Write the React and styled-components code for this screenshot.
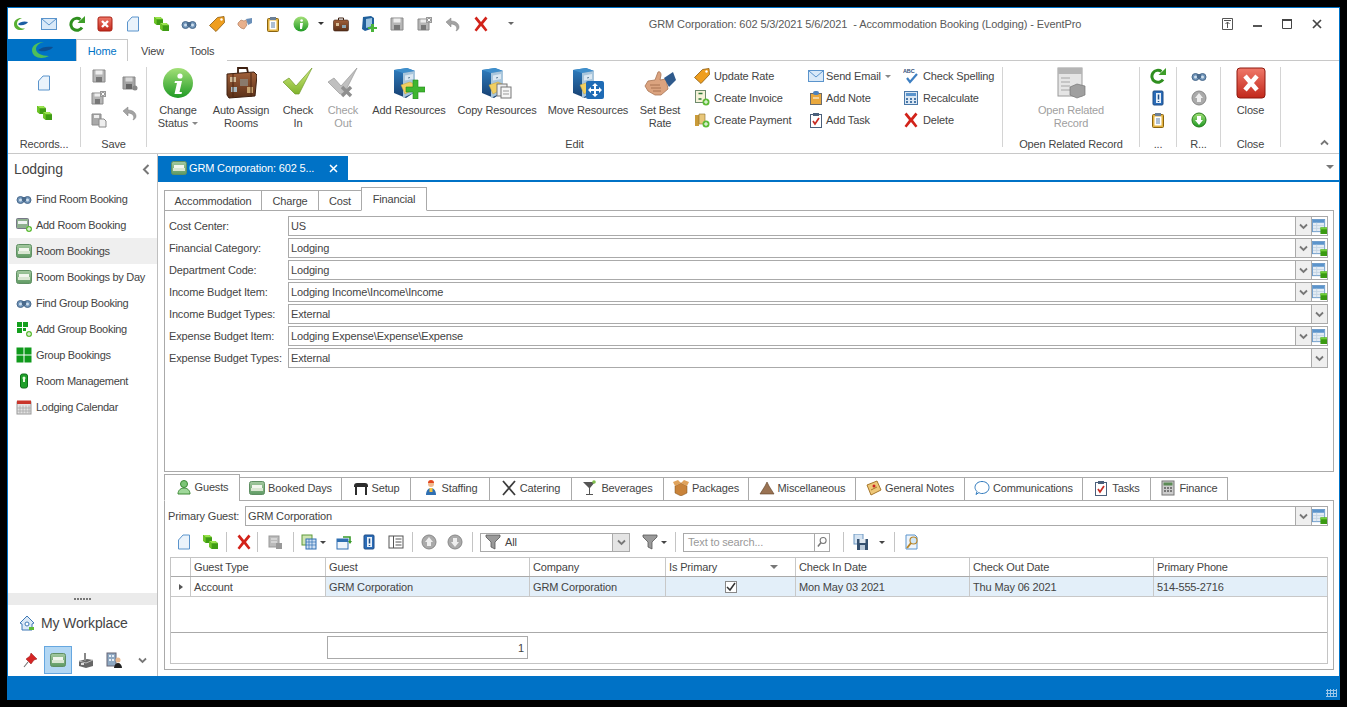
import * as React from 'react';
import styled, { createGlobalStyle } from 'styled-components';

const GlobalStyle = createGlobalStyle`
  html, body {
    margin: 0;
    height: 100%;
    background: #000;
    overflow: hidden;
  }
  body {
    font-family: 'Liberation Sans', Arial, sans-serif;
    font-size: 11px;
    letter-spacing: -0.15px;
    color: #444;
  }
`;

const cube = (x, y, s) => (
  <>
    <path d={`M${x} ${y}h${s * 1.4}l${s * 0.6} ${s * 0.5}v${s * 1.3}h-${s * 1.4}l-${s * 0.6}-${s * 0.5}z`} fill="#3f9c14" />
    <path d={`M${x} ${y}h${s * 1.4}l${s * 0.6} ${s * 0.5}h-${s * 1.4}z`} fill="#9ae34e" />
    <path d={`M${x} ${y}l${s * 0.6} ${s * 0.5}v${s * 1.3}l-${s * 0.6}-${s * 0.5}z`} fill="#6fc528" />
  </>
);

// small (16) and large (32) icon drawings
const cabinet = (
  <>
    <path d="M1 3l13-2 8 3v21l-9 6-12-5z" fill="url(#gBlueD)" />
    <path d="M1 3l13-2 8 3-12 2z" fill="#3f8fcc" />
    <path d="M10 6l12-2v21l-12 6z" fill="#a9c6dc" />
    <path d="M12 8.500l8-1.500v5l-8 1.500z" fill="#dbe8f2" />
    <path d="M15 10.500l2-.4v1l-2 .4z" fill="#5b7c96" />
    <path d="M8 18l9-3 4 2v5l-9 5z" fill="#f2cf60" stroke="#c4a03a" strokeWidth=".5" />
  </>
);
const I = {
  logo: [16, <><path d="M1 8c0-4 4-6.500 8-6-3 1-5 3-5 5.500 0 3 4 5.500 8 5-4 3-11 1.500-11-4.500z" fill="#58b033" /><path d="M5 8c2-2 6-3.500 10-2-1 2-5 4-9 3z" fill="#1b5ea3" /></>],
  mail: [16, <><rect x=".5" y="2.500" width="15" height="11" fill="#d9e9f8" stroke="#5b94cc" /><path d="M1 3l7 6 7-6" fill="none" stroke="#5b94cc" /></>],
  refresh: [16, <><path d="M13 11.500a6 6 0 1 1-1.500-8" fill="none" stroke="#2f8f1f" strokeWidth="3" /><path d="M8.500 7h7.500V0z" fill="#3d9e28" /></>],
  closeRed: [16, <><rect x="1" y="1" width="14" height="14" rx="2" fill="url(#gRed)" stroke="#a81f12" /><path d="M5 5l6 6M11 5l-6 6" stroke="#fff" strokeWidth="2.400" /></>],
  doc: [16, <path d="M2.500 6L7 1h6.500v14h-11z" fill="#eaf3fb" stroke="#5b94cc" />],
  cubes: [16, <>{cube(1, 1, 4.500)}{cube(7, 7, 4.500)}</>],
  binos: [16, <><circle cx="4.500" cy="9" r="3.500" fill="#6f93b8" stroke="#4a6a8c" /><circle cx="11.500" cy="9" r="3.500" fill="#6f93b8" stroke="#4a6a8c" /><rect x="6" y="6" width="4" height="4" fill="#4a6a8c" /><circle cx="4.500" cy="9" r="1.500" fill="#cfe0ee" /><circle cx="11.500" cy="9" r="1.500" fill="#cfe0ee" /></>],
  tag: [16, <><path d="M.5 9.500l8-8 6.500-1 .5 6-8.500 9z" fill="#ef9e1e" stroke="#8a5a10" strokeWidth=".8" /><circle cx="12.500" cy="3.500" r="1.200" fill="#fff" /></>],
  shake: [16, <><path d="M1 7l3-3 3 1 2-1 1 2-1 2 1 1-3 4-3-1-3-3z" fill="#e8b08c" stroke="#b57f5f" strokeWidth=".7" /><path d="M9 3l6-1v5l-4 2z" fill="#6a8fb8" /></>],
  clip: [16, <><rect x="2.500" y="2.500" width="11" height="13" rx="1" fill="#e3b341" stroke="#8a6410" /><rect x="4.500" y="4.500" width="7" height="9" fill="#fff" /><rect x="5" y="1" width="6" height="3" fill="#6b7f96" /><path d="M6 7h4M6 9h4M6 11h4" stroke="#5b7ea6" /></>],
  info: [16, <><circle cx="8" cy="8" r="7.500" fill="url(#gGreen)" /><circle cx="8.600" cy="4.500" r="1.300" fill="#fff" /><path d="M7 7h3l-1 6H7z" fill="#fff" /></>],
  suitcase: [16, <><rect x=".5" y="4" width="15" height="11" rx="1.500" fill="url(#gBrown)" stroke="#3e2010" strokeWidth=".6" /><path d="M5.500 4V2h5v2" fill="none" stroke="#3e2010" /><rect x="3" y="7" width="3" height="3" fill="#d8c09a" /><rect x="9" y="9" width="4" height="3" fill="#8ea5b0" /></>],
  cabAdd: [16, <><path d="M2 1l8-1 3 2v10l-9 3-3-2z" fill="#1f5f9b" /><path d="M5 3l6-1v8l-6 2z" fill="#9cc4e2" /><path d="M10 8h3v3h3v2h-3v3h-3v-3H7v-2h3z" fill="#49b43a" /></>],
  save: [16, <><path d="M2 2h12v12H2z" fill="#b6b6b6" stroke="#8a8a8a" /><rect x="4.500" y="2.500" width="7" height="4" fill="#eee" /><rect x="5" y="9" width="6" height="5" fill="#777" /></>],
  saveX: [16, <><path d="M1 3h11v11H1z" fill="#b6b6b6" stroke="#8a8a8a" /><rect x="3.500" y="3.500" width="6" height="3" fill="#eee" /><rect x="4" y="9" width="5" height="5" fill="#777" /><rect x="9" y="1" width="6" height="6" fill="#999" /><path d="M10.500 2.500l3 3M13.500 2.500l-3 3" stroke="#fff" /></>],
  savePaste: [16, <><path d="M1 2h9v11H1z" fill="#a9a9a9" stroke="#8a8a8a" /><rect x="3" y="3" width="5" height="3" fill="#eee" /><path d="M8 7h5l2 2v6H8z" fill="#eee" stroke="#8a8a8a" /></>],
  saveAs: [16, <><path d="M1 2h12v12H1z" fill="#a4a4a4" stroke="#888" /><rect x="3.500" y="2.500" width="7" height="4" fill="#d8d8d8" /><rect x="4" y="9" width="6" height="5" fill="#666" /><circle cx="13" cy="13" r="2.500" fill="#888" /></>],
  undo: [16, <path d="M1 6l5-4v3c5 0 8 3 8 6 0 2-1 3-3 4 1-2 1-3 0-5-1-1-3-2-5-2v3z" fill="#a3a3a3" stroke="#808080" strokeWidth=".5" />],
  x: [16, <path d="M1.500 2.500l2-2L8 6l4.500-5.500 2 2L10 8l4.500 6-2 1.500L8 10l-4.500 5.500-2-1.500L6 8z" fill="#d2231a" />],
  invoice: [16, <><rect x="1.500" y=".5" width="10" height="12" fill="#f5f2d8" stroke="#6d8a6d" /><path d="M4.500 3.500h4M4.500 9h3" stroke="#2f7a3a" strokeWidth="1.400" /><circle cx="12" cy="12" r="3.500" fill="#5dbb36" /><path d="M10 12h4M12 10v4" stroke="#fff" /></>],
  payment: [16, <><path d="M1 3h4v11H1z" fill="#c99b3a" /><path d="M5 2h6v10H5z" fill="#e8c67a" stroke="#8b6b25" strokeWidth=".6" /><circle cx="12" cy="12" r="3.500" fill="#5dbb36" /><path d="M10 12h4M12 10v4" stroke="#fff" /></>],
  note: [16, <><rect x="2.500" y="3.500" width="11" height="11" fill="#e9a83d" stroke="#6b6b6b" /><rect x="5" y="1" width="6" height="4" rx="2" fill="#4d82bd" /><path d="M5 8h6" stroke="#fff" /></>],
  task: [16, <><rect x="2.500" y="2.500" width="11" height="13" fill="#fff" stroke="#4a5f7a" /><rect x="5" y="1" width="6" height="3" fill="#4a5f7a" /><path d="M5 9l2 3 4-6" fill="none" stroke="#c62b22" strokeWidth="1.700" /></>],
  spell: [16, <><text x="0" y="5" fontSize="5.500" fontWeight="bold" fontFamily="Liberation Sans" fill="#33507a">ABC</text><path d="M4 10l3 4 7-8" fill="none" stroke="#3d7fc2" strokeWidth="2.200" /></>],
  calc: [16, <><rect x="1.500" y="1.500" width="13" height="13" fill="#dbe7f3" stroke="#4a78a8" /><rect x="3" y="3" width="10" height="3" fill="#5b94cc" /><path d="M3 8h2v2H3zM7 8h2v2H7zM11 8h2v2h-2zM3 11h2v2H3zM7 11h2v2H7zM11 11h2v2h-2z" fill="#4a78a8" /></>],
  book: [16, <><rect x="3" y="1" width="10" height="14" rx="1" fill="#2b6cb8" stroke="#1e4d86" /><rect x="6" y="3" width="5" height="10" fill="#e8f1fa" /><path d="M8.500 4.500v5M8.500 11v1" stroke="#1e4d86" strokeWidth="1.500" /></>],
  up: [16, <><circle cx="8" cy="8" r="7" fill="#aaa" stroke="#888" /><path d="M8 3l4 5H10v4H6V8H4z" fill="#eee" /></>],
  down: [16, <><circle cx="8" cy="8" r="7" fill="#aaa" stroke="#888" /><path d="M8 13l4-5H10V4H6v4H4z" fill="#eee" /></>],
  downGreen: [16, <><circle cx="8" cy="8" r="7" fill="url(#gGreen)" stroke="#247a18" /><path d="M8 13l4-5H10V4H6v4H4z" fill="#fff" /></>],
  bed: [16, <><rect x=".500" y="1.500" width="15" height="13" rx="2" fill="url(#gBed)" stroke="#5f8f63" /><rect x="3" y="5" width="10" height="3" fill="#f2f6ee" /><rect x="2" y="8" width="12" height="3" fill="#d9e6d2" /></>],
  bedAdd: [16, <><rect x=".500" y="1.500" width="12" height="10" rx="1" fill="#8fb08f" stroke="#778" /><rect x="2" y="4" width="9" height="3" fill="#eef2f2" /><circle cx="13" cy="12" r="3" fill="#5dbb36" /><path d="M11 12h4M13 10v4" stroke="#fff" /></>],
  groupAdd: [16, <><path d="M1 1h5v5H1zM7 1h5v5H7zM1 7h5v5H1zM7 7h3v3H7z" fill="#14a01e" /><circle cx="13" cy="13" r="3" fill="#5dbb36" /><path d="M11 13h4M13 11v4" stroke="#fff" /></>],
  group: [16, <><path d="M.500 .500h7v7h-7zM8.500 .500h7v7h-7zM.500 8.500h7v7h-7zM8.500 8.500h7v7h-7z" fill="#109a1c" /></>],
  room: [16, <><rect x="4.500" y="1" width="7" height="14" rx="2" fill="#1fa02a" stroke="#0f6f18" /><circle cx="8" cy="5" r="1.500" fill="#e9fbe0" /><rect x="7" y="5" width="2" height="4" fill="#e9fbe0" /></>],
  cal: [16, <><rect x="1" y="3" width="14" height="12" fill="#e3e3e3" stroke="#999" /><rect x="1" y="1.500" width="14" height="3.500" fill="#c9352b" /><path d="M4 6.500v8M7 6.500v8M10 6.500v8M13 6.500v8M1 9h14M1 12h14" stroke="#a9a9a9" strokeWidth=".8" /></>],
  home: [16, <><path d="M8 1L1 8l2 1v6h10V9l2-1z" fill="#dce9f6" stroke="#3f78b5" /><circle cx="8" cy="9" r="2" fill="#fff" stroke="#3f78b5" /><rect x="10" y="12" width="5" height="3" fill="#5dbb36" /></>],
  pin: [16, <><path d="M9 1l6 6-3 1-3 4-5-5 4-3z" fill="#d62424" stroke="#901515" strokeWidth=".5" /><path d="M6 10l-4 5" stroke="#777" strokeWidth="1.200" /></>],
  factory: [16, <><path d="M1 9l8-2 6 1v6l-7 2-7-2z" fill="#666" /><path d="M1 9l7 2 7-3" fill="none" stroke="#bbb" /><rect x="6" y="1" width="2" height="8" fill="#888" /><path d="M3 11h3v2H3z" fill="#ddd" /></>],
  office: [16, <><rect x="1" y="1" width="9" height="13" fill="#8ea8c2" stroke="#667" /><path d="M3 3h2v2H3zM6 3h2v2H6zM3 7h2v2H3zM6 7h2v2H6z" fill="#e6eef6" /><circle cx="12" cy="8" r="2.500" fill="#e8b78f" /><path d="M8 16c0-3 2-5 4-5s4 2 4 5z" fill="#222" /></>],
  gridAdd: [16, <><rect x=".500" y=".5" width="13" height="13" fill="#e4ecf4" stroke="#6b9ac9" /><rect x="1" y="1" width="12" height="3" fill="#5b94cc" /><path d="M1 7h12M1 10h12M5 4v9" stroke="#c3d4e4" /><rect x="9" y="9" width="7" height="7" fill="#3a9a12" /><rect x="9" y="9" width="7" height="2" fill="#6fce38" /></>],
  user: [16, <><circle cx="8" cy="5" r="3.500" fill="#7cc576" stroke="#3c8a35" /><path d="M2 15c0-4 3-6 6-6s6 2 6 6z" fill="#9fd89a" stroke="#3c8a35" /></>],
  table: [16, <path d="M1 6c0-2 1-3 3-3h8c2 0 3 1 3 3v1H1zM2 7h2v8H2zM12 7h2v8h-2z" fill="#2c2c2c" />],
  staff: [16, <><circle cx="8" cy="4" r="3" fill="#f1b98e" /><path d="M5 3c0-2 1-3 3-3s3 1 3 3z" fill="#e2461f" /><path d="M3 15c0-4 2-7 5-7s5 3 5 7z" fill="#2f6fb2" /><rect x="6.500" y="8" width="3" height="4" fill="#f5c53d" /></>],
  fork: [16, <path d="M2 1l12 14M14 1L2 15" stroke="#3c3c3c" strokeWidth="1.800" />],
  martini: [16, <><path d="M1 2h12L8 8v6h3v1H4v-1h3V8z" fill="#555" /><circle cx="12" cy="2" r="1.800" fill="#7fbf4d" /></>],
  pack: [16, <><path d="M8 3l6 3v7l-6 3-6-3V6z" fill="#c9833a" stroke="#7a4c1a" strokeWidth=".5" /><path d="M2 6L0 2l5-2 3 3 3-3 5 2-2 4-6-3z" fill="#e0a35c" /></>],
  misc: [16, <path d="M8 2l2 4 5 8H1l5-8z" fill="#9a7353" stroke="#5e3f25" strokeWidth=".6" />],
  gnote: [16, <><path d="M1 5l10-4 4 9-10 5z" fill="#eec777" stroke="#a7772c" /><circle cx="8" cy="6" r="1.500" fill="#c22" /><path d="M5 10l6-3" stroke="#a7772c" /></>],
  bubble: [16, <path d="M8 1.500c4 0 7 2.500 7 6s-3 6-7 6c-1 0-2 0-3-1l-3 2 1-3c-1-1-2-2.500-2-4 0-3.500 3-6 7-6z" fill="#fff" stroke="#2f79bd" />],
  fincalc: [16, <><rect x="2" y="1" width="12" height="14" fill="#ccc" stroke="#777" /><rect x="3.500" y="2.500" width="9" height="3" fill="#5b8a55" /><path d="M4 7h2v2H4zM7 7h2v2H7zM10 7h2v2h-2zM4 10h2v2H4zM7 10h2v2H7zM10 10h2v2h-2z" fill="#777" /></>],
  grayStack: [16, <><rect x="2" y="2" width="10" height="11" fill="#bbb" stroke="#999" /><path d="M4 5h6M4 8h6" stroke="#eee" /><rect x="9" y="9" width="6" height="6" fill="#999" /></>],
  gridExp: [16, <><rect x="1" y="1" width="10" height="10" fill="#cfe5b3" stroke="#5f9a3a" /><rect x="5" y="5" width="10" height="10" fill="#cfe0f3" stroke="#2f6fb2" /><path d="M5 8h10M5 11h10M8 5v10M11 5v10" stroke="#2f6fb2" strokeWidth=".7" /></>],
  winSwap: [16, <><rect x="1" y="5" width="11" height="10" fill="#eef5fc" stroke="#2f6fb2" /><rect x="1" y="5" width="11" height="3" fill="#2f6fb2" /><path d="M7 3h7v5" fill="none" stroke="#3a9a2a" strokeWidth="1.600" /><path d="M12 7l2 3 2-3z" fill="#3a9a2a" /></>],
  cols: [16, <><rect x="1" y="2" width="14" height="12" fill="#fff" stroke="#555" /><path d="M5.500 2v12M7.500 5h6M7.500 8h6M7.500 11h6" stroke="#555" /></>],
  filter: [16, <path d="M1 1h14v2l-5 5v7l-4-2V8L1 3z" fill="#9a9a9a" stroke="#555" strokeWidth=".8" />],
  lens: [16, <><circle cx="9.500" cy="6" r="4" fill="none" stroke="#777" strokeWidth="1.400" /><path d="M6.500 9l-4 5" stroke="#777" strokeWidth="2" /></>],
  saveBlue: [16, <><rect x="1" y="0" width="9" height="10" fill="#d5e4f3" stroke="#6d97c2" /><rect x="4" y="5" width="11" height="11" fill="#34506f" /><rect x="6.500" y="5" width="6" height="4" fill="#e0e8f0" /><rect x="7" y="11" width="5" height="5" fill="#b9c9d9" /></>],
  preview: [16, <><path d="M2 1h9l2 2v12H2z" fill="#eef5fc" stroke="#5b94cc" /><circle cx="9.500" cy="6.500" r="3.500" fill="#cfe6f6" stroke="#b8862a" strokeWidth="1.200" /><path d="M7 9l-4 5" stroke="#b8862a" strokeWidth="2" /></>],
  // large
  infoL: [32, <><circle cx="16" cy="16" r="15" fill="url(#gGreen)" /><circle cx="18" cy="9" r="2.600" fill="#fff" /><path d="M13 14h7l-2.500 11h2.500l-.5 2h-7l2.500-11h-2.500z" fill="#fff" /></>],
  suitcaseL: [32, <><path d="M13 6V1h9l1 5" fill="none" stroke="#3e2010" strokeWidth="1.800" /><path d="M2 7l27-2 3 3-2 21-26 2-2-3z" fill="url(#gBrown)" stroke="#3e2010" /><rect x="5" y="10" width="6" height="5" fill="#cfb896" /><rect x="15" y="12" width="8" height="7" fill="#8a7a6b" /><rect x="6" y="20" width="6" height="5" fill="#a8bac2" /><rect x="22" y="20" width="6" height="6" fill="#c8a36f" /><path d="M8 7v24M26 6v24" stroke="#4a2612" /></>],
  checkL: [32, <path d="M1 15l6-4 7 8L30 1 17 27h-4z" fill="url(#gCheck)" stroke="#6f9a2a" strokeWidth=".7" />],
  checkOutL: [32, <><path d="M1 15l6-4 7 8L30 1 17 27h-4z" fill="#c0c0c0" stroke="#9a9a9a" strokeWidth=".7" /><path d="M15 20l9 9M24 20l-9 9" stroke="#8f8f8f" strokeWidth="3.400" /></>],
  cabAddL: [32, <>{cabinet}<path d="M20 13h5v7h7v5h-7v7h-5v-7h-7v-5h7z" fill="#3fb52f" stroke="#1f8a1a" strokeWidth=".6" /></>],
  cabCopyL: [32, <>{cabinet}<rect x="16" y="17" width="10" height="12" fill="#eee" stroke="#777" /><rect x="20" y="20" width="10" height="11" fill="#f6f6f6" stroke="#777" /><path d="M22 24h6M22 27h6" stroke="#999" /></>],
  cabMoveL: [32, <>{cabinet}<rect x="14" y="14" width="18" height="18" rx="2" fill="#1f6bb5" /><path d="M23 16l3 3h-2v3h3v-2l3 3-3 3v-2h-3v3h2l-3 3-3-3h2v-3h-3v2l-3-3 3-3v2h3v-3h-2z" fill="#fff" /></>],
  shakeL: [32, <><path d="M4 14l7-1 3-8c2-1 3 1 3 3l-1 5 6-1 2 10-7 6H11l-7-4-3-5z" fill="#dba37f" stroke="#a87353" strokeWidth=".8" /><path d="M20 11l9-6 3 8-7 7z" fill="#2f5a8c" /><path d="M6 18h10M7 21h10M9 24h8" stroke="#a87353" /></>],
  closeL: [32, <><rect x="2" y="1" width="28" height="30" rx="3" fill="url(#gRed)" stroke="#8e180e" /><path d="M10 9l12 14M22 9L10 23" stroke="#fff" strokeWidth="4.500" /></>],
  relatedL: [32, <><rect x="3" y="1" width="24" height="28" fill="#e5e5e5" stroke="#9a9a9a" /><rect x="3" y="1" width="24" height="6" fill="#b5b5b5" /><path d="M6 11h9M6 15h9M6 19h9M6 23h9" stroke="#a5a5a5" /><path d="M15 20l7-3 8 2v9l-8 3-7-3z" fill="#9f9f9f" stroke="#777" strokeWidth=".7" /></>],
};

const GRADS = [
  ['gGreen', '#a3e078', '#1f9a24'],
  ['gRed', '#f0796a', '#c1271a'],
  ['gBrown', '#a0603a', '#5a3018'],
  ['gBlueD', '#2f7ec0', '#163f70'],
  ['gBed', '#a4c9a0', '#5f9a63'],
  ['gCheck', '#d6ee82', '#7fb32d'],
];

const IconSvg = styled.svg`
  display: block;
  flex: none;
`;

const Defs = styled.svg`
  display: block;
  width: 0;
  height: 0;
`;

function Icon({ name, size }) {
  const [vb, art] = I[name];
  const s = size || vb;
  return (
    <IconSvg width={s} height={s} viewBox={`0 0 ${vb} ${vb}`}>
      {art}
    </IconSvg>
  );
}

const Chevron = ({ color = '#777', size = 9 }) => (
  <IconSvg width={size} height={size} viewBox="0 0 9 9">
    <path d="M1 2.500l3.500 3.500L8 2.500" fill="none" stroke={color} strokeWidth="1.800" />
  </IconSvg>
);

const Caret = styled.span`
  display: block;
  width: 0;
  height: 0;
  border-left: ${(p) => p.$s || 3}px solid transparent;
  border-right: ${(p) => p.$s || 3}px solid transparent;
  border-top: ${(p) => p.$s || 3}px solid ${(p) => p.$c || '#555'};
  margin: ${(p) => p.$m || '0'};
  flex: none;
`;

// window
const Window = styled.div`
  box-sizing: border-box;
  width: 1333px;
  height: 693px;
  margin: 7px;
  display: flex;
  flex-direction: column;
  background: #fff;
  border: 1px solid #0072c6;
  border-bottom: none;
`;

const TitleBar = styled.div`
  display: flex;
  align-items: center;
  height: 31px;
  flex: none;
`;

const Qat = styled.div`
  display: flex;
  align-items: center;
  width: 522px;
  flex: none;
  margin-left: -1px;
`;

const QatBtn = styled.div`
  width: ${(p) => p.$w || 28}px;
  display: flex;
  justify-content: center;
  align-items: center;
`;

const Title = styled.div`
  flex: 1;
  text-align: center;
  color: #595959;
  white-space: pre;
  letter-spacing: -0.1px;
`;

const WinBtns = styled.div`
  display: flex;
  width: 138px;
  padding-left: 11px;
  box-sizing: border-box;
  flex: none;
`;

const WinBtn = styled.div`
  width: 30px;
  height: 16px;
  display: flex;
  justify-content: center;
  align-items: center;
`;

const TabRow = styled.div`
  display: flex;
  height: 22px;
  flex: none;
  border-bottom: 1px solid #c8c8c8;
  box-sizing: border-box;
`;

const AppBtn = styled.div`
  width: 68px;
  height: 22px;
  background: #0072c6;
  display: flex;
  align-items: center;
  justify-content: center;
`;

const RibbonTab = styled.div`
  height: 22px;
  box-sizing: border-box;
  width: ${(p) => p.$w}px;
  display: flex;
  align-items: center;
  justify-content: center;
  color: ${(p) => (p.$active ? '#0072c6' : '#444')};
  background: #fff;
  border: 1px solid ${(p) => (p.$active ? '#c8c8c8' : 'transparent')};
  border-bottom: none;
`;

const Ribbon = styled.div`
  display: flex;
  height: 93px;
  flex: none;
  box-sizing: border-box;
  border-bottom: 1px solid #c8c8c8;
`;

const Group = styled.div`
  width: ${(p) => p.$w}px;
  display: flex;
  flex-direction: column;
  flex: none;
`;

const GroupBody = styled.div`
  display: flex;
  height: 76px;
  padding-left: ${(p) => p.$pad || 0}px;
`;

const GroupLabel = styled.div`
  text-align: center;
  line-height: 14px;
  height: 14px;
  white-space: nowrap;
`;

const RibbonSep = styled.div`
  width: 1px;
  background: #d4d4d4;
  margin: 6px 0 6px;
  flex: none;
`;

const LargeBtn = styled.div`
  width: ${(p) => p.$w}px;
  flex: none;
  display: flex;
  flex-direction: column;
  align-items: center;
  padding-top: 6px;
  color: ${(p) => (p.$off ? '#a0a0a0' : '#444')};
`;

const LargeLabel = styled.div`
  margin-top: 5px;
  line-height: 13px;
  text-align: center;
  white-space: nowrap;
`;

const LabelLine = styled.div`
  display: flex;
  align-items: center;
  justify-content: center;
`;

const SmallCol = styled.div`
  width: ${(p) => p.$w}px;
  flex: none;
  padding-top: 4px;
  padding-left: ${(p) => p.$pad || 0}px;
  box-sizing: border-box;
`;

const SmallItem = styled.div`
  height: 22px;
  display: flex;
  align-items: center;
  justify-content: ${(p) => (p.$center ? 'center' : 'flex-start')};
  gap: ${(p) => p.$gap || 4}px;
  white-space: nowrap;
`;

const BigPitchItem = styled.div`
  height: 30px;
  display: flex;
  align-items: center;
  justify-content: center;
`;

const BigPitchCol = styled.div`
  width: ${(p) => p.$w}px;
  flex: none;
  padding-top: ${(p) => p.$top}px;
`;

const Collapse = styled.div`
  flex: 1;
  display: flex;
  justify-content: flex-end;
  align-items: flex-end;
  padding: 0 10px 7px 0;
`;

// main area
const Main = styled.div`
  flex: 1;
  display: flex;
  min-height: 0;
`;

const Sidebar = styled.div`
  width: 150px;
  flex: none;
  box-sizing: border-box;
  border-right: 1px solid #bfbfbf;
  display: flex;
  flex-direction: column;
`;

const SideHead = styled.div`
  height: 32px;
  flex: none;
  box-sizing: border-box;
  display: flex;
  align-items: center;
  justify-content: space-between;
  padding: 0 7px 2px 6px;
  font-size: 14px;
`;

const SideItem = styled.div`
  height: 26px;
  flex: none;
  display: flex;
  align-items: center;
  gap: 4px;
  padding-left: 7px;
  margin-left: 1px;
  letter-spacing: -0.3px;
  background: ${(p) => (p.$active ? '#efefef' : 'transparent')};
  white-space: nowrap;
`;

const Spacer = styled.div`
  flex: 1;
`;

const Splitter = styled.div`
  height: 12px;
  flex: none;
  background: #ebebeb;
  display: flex;
  justify-content: center;
  align-items: center;
  gap: 1px;
`;

const Dot = styled.span`
  width: 2px;
  height: 2px;
  background: #777;
`;

const Workplace = styled.div`
  height: 36px;
  flex: none;
  display: flex;
  align-items: center;
  gap: 6px;
  padding-left: 11px;
  font-size: 14px;
`;

const PaneIcons = styled.div`
  height: 35px;
  flex: none;
  display: flex;
  align-items: flex-start;
  padding: 5px 0 0 8px;
  box-sizing: border-box;
`;

const PaneBtn = styled.div`
  width: 28px;
  height: 28px;
  box-sizing: border-box;
  display: flex;
  align-items: center;
  justify-content: center;
  background: ${(p) => (p.$active ? '#b3d7f3' : 'transparent')};
  border: 1px solid ${(p) => (p.$active ? '#66a7e0' : 'transparent')};
`;

const Content = styled.div`
  flex: 1;
  min-width: 0;
  display: flex;
  flex-direction: column;
`;

const DocStrip = styled.div`
  height: 28px;
  flex: none;
  box-sizing: border-box;
  border-bottom: 2px solid #0072c6;
  display: flex;
  align-items: flex-end;
  justify-content: space-between;
`;

const DocTab = styled.div`
  width: 190px;
  height: 24px;
  box-sizing: border-box;
  background: #0072c6;
  color: #fff;
  display: flex;
  align-items: center;
  padding: 0 10px 0 13px;
  gap: 2px;
`;

const DocTitle = styled.span`
  flex: 1;
  white-space: nowrap;
`;

const DocMenu = styled.div`
  padding: 0 5px 11px 0;
`;

const Pane = styled.div`
  flex: 1;
  min-height: 0;
  display: flex;
  flex-direction: column;
  padding: 5px 5px 6px 6px;
`;

const Tabs = styled.div`
  display: flex;
  align-items: flex-end;
  flex: none;
  height: ${(p) => p.$h}px;
  position: relative;
  z-index: 1;
`;

const Tab = styled.div`
  width: ${(p) => p.$w}px;
  height: ${(p) => (p.$active ? p.$h + 3 : p.$h)}px;
  box-sizing: border-box;
  margin-right: -1px;
  margin-bottom: -1px;
  padding-bottom: ${(p) => (p.$h > 21 ? 2 : 0)}px;
  flex: none;
  display: flex;
  align-items: center;
  justify-content: center;
  gap: 3px;
  white-space: nowrap;
  background: #fff;
  border: 1px solid #aaa;
  border-bottom: ${(p) => (p.$active ? '1px solid #fff' : '1px solid #aaa')};
`;

const FormPanel = styled.div`
  flex: 1;
  min-height: 0;
  box-sizing: border-box;
  border: 1px solid #aaa;
  padding: 5px 5px 0 4px;
  display: flex;
  flex-direction: column;
  gap: 2px;
`;

const FieldRow = styled.div`
  display: flex;
  align-items: center;
  height: 20px;
  flex: none;
`;

const FieldLabel = styled.div`
  width: ${(p) => p.$w}px;
  flex: none;
  white-space: nowrap;
`;

const Combo = styled.div`
  flex: 1;
  height: 20px;
  box-sizing: border-box;
  border: 1px solid #aaa;
  display: flex;
  min-width: 0;
`;

const ComboText = styled.div`
  flex: 1;
  padding-left: 2px;
  line-height: 18px;
  white-space: nowrap;
`;

const ComboBtn = styled.div`
  width: 16px;
  flex: none;
  box-sizing: border-box;
  border-left: 1px solid #aaa;
  background: ${(p) => (p.$plain ? '#fff' : '#efefef')};
  display: flex;
  align-items: center;
  justify-content: center;
`;

const DetailWrap = styled.div`
  flex: none;
  height: 196px;
  margin-top: 2px;
  display: flex;
  flex-direction: column;
`;

const DetailPanel = styled.div`
  flex: 1;
  min-height: 0;
  box-sizing: border-box;
  border: 1px solid #aaa;
  padding: 5px 5px 5px 3px;
  display: flex;
  flex-direction: column;
`;

const Toolbar = styled.div`
  display: flex;
  align-items: center;
  height: 20px;
  margin: 6px 0 5px 3px;
  flex: none;
`;

const ToolBtn = styled.div`
  width: ${(p) => p.$w || 26}px;
  margin-left: ${(p) => p.$ml || 0}px;
  flex: none;
  display: flex;
  align-items: center;
  justify-content: center;
  gap: 3px;
`;

const ToolSep = styled.div`
  width: 1px;
  height: 20px;
  background: #c4c4c4;
  flex: none;
  margin: 0 ${(p) => p.$r ?? 3}px 0 ${(p) => p.$l ?? 3}px;
`;

const ToolCombo = styled.div`
  width: 150px;
  height: 19px;
  box-sizing: border-box;
  border: 1px solid #aaa;
  flex: none;
  display: flex;
  align-items: center;
  padding-left: 4px;
  gap: 4px;
`;

const ToolComboArrow = styled.div`
  width: 16px;
  height: 17px;
  margin-left: auto;
  background: #e4e4e4;
  border-left: 1px solid #aaa;
  display: flex;
  align-items: center;
  justify-content: center;
`;

const SearchBox = styled.div`
  width: 147px;
  height: 19px;
  box-sizing: border-box;
  border: 1px solid #aaa;
  flex: none;
  display: flex;
  align-items: center;
  padding-left: 4px;
  color: #999;
`;

const SearchBtn = styled.div`
  width: 14px;
  height: 17px;
  margin-left: auto;
  border-left: 1px solid #aaa;
  display: flex;
  align-items: center;
  justify-content: center;
`;

const DataGrid = styled.div`
  flex: 1;
  min-height: 0;
  box-sizing: border-box;
  border: 1px solid #c4c4c4;
  margin-left: 2px;
  display: flex;
  flex-direction: column;
`;

const GridRow = styled.div`
  display: grid;
  grid-template-columns: 20px 135px 204px 136px 130px 174px 184px 174px;
  height: ${(p) => p.$h}px;
  flex: none;
  box-sizing: border-box;
  border-bottom: 1px solid ${(p) => (p.$head ? '#aaa' : '#c8c8c8')};
`;

const Cell = styled.div`
  box-sizing: border-box;
  border-right: 1px solid #c8c8c8;
  padding: 0 ${(p) => (p.$center ? 0 : 3)}px;
  display: flex;
  align-items: center;
  justify-content: ${(p) => (p.$center ? 'center' : p.$between ? 'space-between' : 'flex-start')};
  background: ${(p) => (p.$sel ? '#e3eff9' : '#fff')};
  white-space: nowrap;
`;

const GridArrow = styled.span`
  width: 0;
  height: 0;
  border-top: 3px solid transparent;
  border-bottom: 3px solid transparent;
  border-left: 4px solid #555;
`;

const CheckBox = styled.div`
  width: 12px;
  height: 12px;
  box-sizing: border-box;
  border: 1px solid #888;
  background: #fff;
`;

const GridEmpty = styled.div`
  flex: 1;
`;

const GridFooter = styled.div`
  height: 31px;
  flex: none;
  box-sizing: border-box;
  border-top: 1px solid #aaa;
  padding: 3px 0 0 156px;
`;

const FooterCell = styled.div`
  width: 201px;
  height: 23px;
  box-sizing: border-box;
  border: 1px solid #aaa;
  display: flex;
  align-items: center;
  justify-content: flex-end;
  padding-right: 3px;
`;

const StatusBar = styled.div`
  height: 24px;
  box-sizing: border-box;
  flex: none;
  background: #0072c6;
  margin: 0 -1px;
  display: flex;
  justify-content: flex-end;
  align-items: flex-end;
  padding: 0 3px 3px 0;
`;

const Grip = styled.div`
  width: 11px;
  height: 8px;
  background: radial-gradient(circle, #9cc7ea 1px, transparent 1.2px) 0 0 / 3px 3px;
`;

const qat = ['logo', 'mail', 'refresh', 'closeRed', 'doc', 'cubes', 'binos', 'tag', 'shake', 'clip', 'info'];
const qat2 = ['suitcase', 'cabAdd', 'save', 'saveX', 'undo', 'x'];

const sideItems = [
  ['binos', 'Find Room Booking'],
  ['bedAdd', 'Add Room Booking'],
  ['bed', 'Room Bookings', true],
  ['bed', 'Room Bookings by Day'],
  ['binos', 'Find Group Booking'],
  ['groupAdd', 'Add Group Booking'],
  ['group', 'Group Bookings'],
  ['room', 'Room Management'],
  ['cal', 'Lodging Calendar'],
];

const fields = [
  ['Cost Center:', 'US', true],
  ['Financial Category:', 'Lodging', true],
  ['Department Code:', 'Lodging', true],
  ['Income Budget Item:', 'Lodging Income\\Income\\Income', true],
  ['Income Budget Types:', 'External', false],
  ['Expense Budget Item:', 'Lodging Expense\\Expense\\Expense', true],
  ['Expense Budget Types:', 'External', false],
];

const detailTabs = [
  ['user', 'Guests', 76, true],
  ['bed', 'Booked Days', 103],
  ['table', 'Setup', 70],
  ['staff', 'Staffing', 80],
  ['fork', 'Catering', 83],
  ['martini', 'Beverages', 93],
  ['pack', 'Packages', 86],
  ['misc', 'Miscellaneous', 108],
  ['gnote', 'General Notes', 110],
  ['bubble', 'Communications', 119],
  ['task', 'Tasks', 69],
  ['fincalc', 'Finance', 78],
];

const columns = ['Guest Type', 'Guest', 'Company', 'Is Primary', 'Check In Date', 'Check Out Date', 'Primary Phone'];

export default function App() {
  return (
    <>
      <GlobalStyle />
      <Defs>
        <defs>
          {GRADS.map(([id, a, b]) => (
            <linearGradient key={id} id={id} x1="0" y1="0" x2="0" y2="1">
              <stop offset="0" stopColor={a} />
              <stop offset="1" stopColor={b} />
            </linearGradient>
          ))}
        </defs>
      </Defs>
      <Window>
        <TitleBar>
          <Qat>
            {qat.map((n) => (
              <QatBtn key={n}><Icon name={n} /></QatBtn>
            ))}
            <QatBtn $w={12}><Caret $c="#333" /></QatBtn>
            {qat2.map((n) => (
              <QatBtn key={n}><Icon name={n} /></QatBtn>
            ))}
            <QatBtn $w={32}><Caret $c="#666" /></QatBtn>
          </Qat>
          <Title>GRM Corporation: 602 5/3/2021 5/6/2021  - Accommodation Booking (Lodging) - EventPro</Title>
          <WinBtns>
            <WinBtn>
              <IconSvg width="11" height="12" viewBox="0 0 11 12">
                <path d="M.5.500h10v11H.5z M2 2.500h7 M5.500 10V4 M3.500 6l2-2 2 2" fill="none" stroke="#555" />
              </IconSvg>
            </WinBtn>
            <WinBtn>
              <IconSvg width="9" height="9" viewBox="0 0 9 9"><path d="M0 6h9v2H0z" fill="#555" /></IconSvg>
            </WinBtn>
            <WinBtn>
              <IconSvg width="10" height="10" viewBox="0 0 10 10"><path d="M.5 1.500h9v8h-9z" fill="none" stroke="#444" /><path d="M0 0h10v2H0z" fill="#444" /></IconSvg>
            </WinBtn>
            <WinBtn>
              <IconSvg width="10" height="10" viewBox="0 0 10 10"><path d="M1 1l8 8M9 1L1 9" stroke="#444" strokeWidth="1.700" /></IconSvg>
            </WinBtn>
          </WinBtns>
        </TitleBar>

        <TabRow>
          <AppBtn>
            <IconSvg width="24" height="18" viewBox="0 0 24 18">
              <path d="M2 9c0-5 6-8 12-8-5 1-8 4-8 7 0 4 5 7 13 7-7 4-17 2-17-6z" fill="#4fbf5a" />
              <path d="M8 9c4-3 9-4 15-3-2 3-8 5-13 4z" fill="#0d4f92" />
            </IconSvg>
          </AppBtn>
          <RibbonTab $w={52} $active>Home</RibbonTab>
          <RibbonTab $w={49}>View</RibbonTab>
          <RibbonTab $w={50}>Tools</RibbonTab>
        </TabRow>

        <Ribbon>
          <Group $w={72}>
            <GroupBody>
              <BigPitchCol $w={72} $top={7}>
                <BigPitchItem><Icon name="doc" /></BigPitchItem>
                <BigPitchItem><Icon name="cubes" /></BigPitchItem>
              </BigPitchCol>
            </GroupBody>
            <GroupLabel>Records...</GroupLabel>
          </Group>
          <RibbonSep />
          <Group $w={65}>
            <GroupBody>
              <SmallCol $w={36}>
                <SmallItem $center><Icon name="save" /></SmallItem>
                <SmallItem $center><Icon name="saveX" /></SmallItem>
                <SmallItem $center><Icon name="savePaste" /></SmallItem>
              </SmallCol>
              <BigPitchCol $w={25} $top={7}>
                <BigPitchItem><Icon name="saveAs" /></BigPitchItem>
                <BigPitchItem><Icon name="undo" /></BigPitchItem>
              </BigPitchCol>
            </GroupBody>
            <GroupLabel>Save</GroupLabel>
          </Group>
          <RibbonSep />
          <Group $w={855}>
            <GroupBody $pad={3}>
              <LargeBtn $w={56}>
                <Icon name="infoL" />
                <LargeLabel>Change<LabelLine>Status<Caret $c="#888" $m="0 0 0 4px" /></LabelLine></LargeLabel>
              </LargeBtn>
              <LargeBtn $w={70}>
                <Icon name="suitcaseL" />
                <LargeLabel>Auto Assign<br />Rooms</LargeLabel>
              </LargeBtn>
              <LargeBtn $w={44}>
                <Icon name="checkL" />
                <LargeLabel>Check<br />In</LargeLabel>
              </LargeBtn>
              <LargeBtn $w={46} $off>
                <Icon name="checkOutL" />
                <LargeLabel>Check<br />Out</LargeLabel>
              </LargeBtn>
              <LargeBtn $w={86}>
                <Icon name="cabAddL" />
                <LargeLabel>Add Resources</LargeLabel>
              </LargeBtn>
              <LargeBtn $w={90}>
                <Icon name="cabCopyL" />
                <LargeLabel>Copy Resources</LargeLabel>
              </LargeBtn>
              <LargeBtn $w={92}>
                <Icon name="cabMoveL" />
                <LargeLabel>Move Resources</LargeLabel>
              </LargeBtn>
              <LargeBtn $w={52}>
                <Icon name="shakeL" />
                <LargeLabel>Set Best<br />Rate</LargeLabel>
              </LargeBtn>
              <SmallCol $w={122} $pad={8}>
                <SmallItem><Icon name="tag" />Update Rate</SmallItem>
                <SmallItem><Icon name="invoice" />Create Invoice</SmallItem>
                <SmallItem><Icon name="payment" />Create Payment</SmallItem>
              </SmallCol>
              <SmallCol $w={95}>
                <SmallItem $gap={2}><Icon name="mail" />Send Email<Caret $c="#888" $m="0 0 0 2px" /></SmallItem>
                <SmallItem $gap={2}><Icon name="note" />Add Note</SmallItem>
                <SmallItem $gap={2}><Icon name="task" />Add Task</SmallItem>
              </SmallCol>
              <SmallCol $w={95}>
                <SmallItem><Icon name="spell" />Check Spelling</SmallItem>
                <SmallItem><Icon name="calc" />Recalculate</SmallItem>
                <SmallItem><Icon name="x" />Delete</SmallItem>
              </SmallCol>
            </GroupBody>
            <GroupLabel>Edit</GroupLabel>
          </Group>
          <RibbonSep />
          <Group $w={136}>
            <GroupBody>
              <LargeBtn $w={136} $off>
                <Icon name="relatedL" />
                <LargeLabel>Open Related<br />Record</LargeLabel>
              </LargeBtn>
            </GroupBody>
            <GroupLabel>Open Related Record</GroupLabel>
          </Group>
          <RibbonSep />
          <Group $w={36}>
            <GroupBody>
              <SmallCol $w={36}>
                <SmallItem $center><Icon name="refresh" /></SmallItem>
                <SmallItem $center><Icon name="book" /></SmallItem>
                <SmallItem $center><Icon name="clip" /></SmallItem>
              </SmallCol>
            </GroupBody>
            <GroupLabel>...</GroupLabel>
          </Group>
          <RibbonSep />
          <Group $w={43}>
            <GroupBody>
              <SmallCol $w={43}>
                <SmallItem $center><Icon name="binos" /></SmallItem>
                <SmallItem $center><Icon name="up" /></SmallItem>
                <SmallItem $center><Icon name="downGreen" /></SmallItem>
              </SmallCol>
            </GroupBody>
            <GroupLabel>R...</GroupLabel>
          </Group>
          <RibbonSep />
          <Group $w={59}>
            <GroupBody>
              <LargeBtn $w={59}>
                <Icon name="closeL" />
                <LargeLabel>Close</LargeLabel>
              </LargeBtn>
            </GroupBody>
            <GroupLabel>Close</GroupLabel>
          </Group>
          <RibbonSep />
          <Collapse>
            <IconSvg width="9" height="7" viewBox="0 0 9 7"><path d="M1 5.500l3.500-3.500L8 5.500" fill="none" stroke="#777" strokeWidth="1.800" /></IconSvg>
          </Collapse>
        </Ribbon>

        <Main>
          <Sidebar>
            <SideHead>
              Lodging
              <IconSvg width="8" height="11" viewBox="0 0 8 11"><path d="M6.500 1L2 5.500 6.500 10" fill="none" stroke="#777" strokeWidth="2" /></IconSvg>
            </SideHead>
            {sideItems.map(([icon, label, active]) => (
              <SideItem key={label} $active={active}>
                <Icon name={icon} />
                <span>{label}</span>
              </SideItem>
            ))}
            <Spacer />
            <Splitter>
              {[0, 1, 2, 3, 4, 5].map((i) => <Dot key={i} />)}
            </Splitter>
            <Workplace><Icon name="home" />My Workplace</Workplace>
            <PaneIcons>
              <PaneBtn><Icon name="pin" /></PaneBtn>
              <PaneBtn $active><Icon name="bed" /></PaneBtn>
              <PaneBtn><Icon name="factory" /></PaneBtn>
              <PaneBtn><Icon name="office" /></PaneBtn>
              <PaneBtn><Chevron /></PaneBtn>
            </PaneIcons>
          </Sidebar>

          <Content>
            <DocStrip>
              <DocTab>
                <Icon name="bed" />
                <DocTitle>GRM Corporation: 602 5...</DocTitle>
                <IconSvg width="9" height="9" viewBox="0 0 9 9"><path d="M1 1l7 7M8 1L1 8" stroke="#fff" strokeWidth="1.500" /></IconSvg>
              </DocTab>
              <DocMenu><Caret $s={4} $c="#777" /></DocMenu>
            </DocStrip>

            <Pane>
              <Tabs $h={23}>
                <Tab $w={98} $h={21}>Accommodation</Tab>
                <Tab $w={58} $h={21}>Charge</Tab>
                <Tab $w={44} $h={21}>Cost</Tab>
                <Tab $w={66} $h={21} $active>Financial</Tab>
              </Tabs>
              <FormPanel>
                {fields.map(([label, value, add]) => (
                  <FieldRow key={label}>
                    <FieldLabel $w={119}>{label}</FieldLabel>
                    <Combo>
                      <ComboText>{value}</ComboText>
                      <ComboBtn><Chevron /></ComboBtn>
                      {add && <ComboBtn $plain><Icon name="gridAdd" size={15} /></ComboBtn>}
                    </Combo>
                  </FieldRow>
                ))}
              </FormPanel>

              <DetailWrap>
                <Tabs $h={26}>
                  {detailTabs.map(([icon, label, w, active]) => (
                    <Tab key={label} $w={w} $h={24} $active={active}>
                      <Icon name={icon} />
                      {label}
                    </Tab>
                  ))}
                </Tabs>
                <DetailPanel>
                  <FieldRow>
                    <FieldLabel $w={77}>Primary Guest:</FieldLabel>
                    <Combo>
                      <ComboText>GRM Corporation</ComboText>
                      <ComboBtn><Chevron /></ComboBtn>
                      <ComboBtn $plain><Icon name="gridAdd" size={15} /></ComboBtn>
                    </Combo>
                  </FieldRow>
                  <Toolbar>
                    <ToolBtn><Icon name="doc" /></ToolBtn>
                    <ToolBtn><Icon name="cubes" /></ToolBtn>
                    <ToolSep />
                    <ToolBtn $w={27}><Icon name="x" /></ToolBtn>
                    <ToolSep $l={0} $r={4} />
                    <ToolBtn><Icon name="grayStack" /></ToolBtn>
                    <ToolSep $l={5} $r={0} />
                    <ToolBtn $w={39}><Icon name="gridExp" /><Caret $c="#444" /></ToolBtn>
                    <ToolBtn $w={22}><Icon name="winSwap" /></ToolBtn>
                    <ToolBtn $w={27}><Icon name="book" /></ToolBtn>
                    <ToolBtn $w={28}><Icon name="cols" /></ToolBtn>
                    <ToolSep $l={2} $r={2} />
                    <ToolBtn $w={28}><Icon name="up" /></ToolBtn>
                    <ToolBtn $w={24}><Icon name="down" /></ToolBtn>
                    <ToolSep $l={5} $r={7} />
                    <ToolCombo>
                      <Icon name="filter" />
                      All
                      <ToolComboArrow><Chevron /></ToolComboArrow>
                    </ToolCombo>
                    <ToolBtn $w={41} $ml={4}><Icon name="filter" /><Caret $c="#444" /></ToolBtn>
                    <ToolSep $l={0} $r={7} />
                    <SearchBox>
                      Text to search...
                      <SearchBtn><Icon name="lens" size={12} /></SearchBtn>
                    </SearchBox>
                    <ToolSep $l={13} $r={6} />
                    <ToolBtn $w={22}><Icon name="saveBlue" /></ToolBtn>
                    <Caret $c="#444" $m="0 9px 0 7px" />
                    <ToolSep $l={0} $r={8} />
                    <ToolBtn $w={17}><Icon name="preview" /></ToolBtn>
                  </Toolbar>
                  <DataGrid>
                    <GridRow $h={19} $head>
                      <Cell />
                      {columns.map((c) => (
                        <Cell key={c} $between={c === 'Is Primary'}>
                          {c}
                          {c === 'Is Primary' && <Caret $s={4} $c="#777" $m="0 14px 0 0" />}
                        </Cell>
                      ))}
                    </GridRow>
                    <GridRow $h={20}>
                      <Cell $center><GridArrow /></Cell>
                      <Cell>Account</Cell>
                      <Cell $sel>GRM Corporation</Cell>
                      <Cell $sel>GRM Corporation</Cell>
                      <Cell $sel $center>
                        <CheckBox>
                          <IconSvg width="10" height="10" viewBox="0 0 10 10"><path d="M1 5l3 3 5-7" fill="none" stroke="#333" strokeWidth="1.500" /></IconSvg>
                        </CheckBox>
                      </Cell>
                      <Cell $sel>Mon May 03 2021</Cell>
                      <Cell $sel>Thu May 06 2021</Cell>
                      <Cell $sel>514-555-2716</Cell>
                    </GridRow>
                    <GridEmpty />
                    <GridFooter>
                      <FooterCell>1</FooterCell>
                    </GridFooter>
                  </DataGrid>
                </DetailPanel>
              </DetailWrap>
            </Pane>
          </Content>
        </Main>
        <StatusBar><Grip /></StatusBar>
      </Window>
    </>
  );
}
